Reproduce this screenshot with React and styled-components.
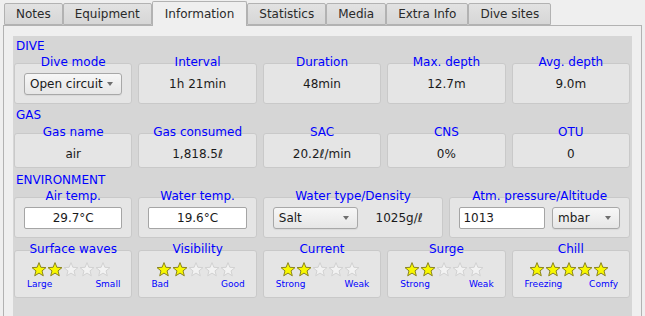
import React from 'react'
import styled, { createGlobalStyle } from 'styled-components'

const GlobalStyle = createGlobalStyle`
  html, body {
    margin: 0;
    padding: 0;
    height: 100%;
    overflow: hidden;
    background: #efefef;
  }
  #root {
    height: 100%;
  }
  * {
    box-sizing: border-box;
  }
`

const Window = styled.div`
  height: 100%;
  display: flex;
  flex-direction: column;
  background: #efefef;
  font-family: 'DejaVu Sans', 'Liberation Sans', sans-serif;
  font-size: 12px;
  color: #1a1a1a;
`

const TabBar = styled.div`
  display: flex;
  align-items: flex-end;
  height: 25px;
  padding-left: 4px;
`

const Tab = styled.div`
  position: relative;
  height: ${p => (p.$active ? '25px' : '22px')};
  margin-bottom: ${p => (p.$active ? '-1px' : '0')};
  padding: 0 ${p => (p.$active ? '12px' : '11px')};
  display: flex;
  align-items: center;
  border: 1px solid #b2b2b2;
  border-bottom: ${p => (p.$active ? 'none' : '1px solid #b2b2b2')};
  border-radius: 2px 2px 0 0;
  background: ${p =>
    p.$active ? '#efefef' : 'linear-gradient(#e2e2e2, #d6d6d6)'};
  color: #2a2a2a;
  z-index: ${p => (p.$active ? 2 : 1)};
  white-space: nowrap;
`

const Pane = styled.div`
  flex: 1;
  margin: 0 3px 0 3px;
  border: 1px solid #b2b2b2;
  border-bottom: none;
  padding: 10px 9px 0 9px;
  display: flex;
  flex-direction: column;
  min-height: 0;
`

const Content = styled.div`
  flex: 1;
  background: #d6d6d6;
  padding: 3px 2px 0 1px;
`

const SectionLabel = styled.div`
  color: #0000ff;
  line-height: 14px;
  padding-left: 2px;
  margin-top: ${p => p.$top || 0}px;
`

const Row = styled.div`
  display: grid;
  grid-template-columns: ${p => p.$cols || 'repeat(5, 1fr)'};
  column-gap: 6px;
  margin-top: ${p => p.$top || 0}px;
`

const Group = styled.div`
  display: flex;
  flex-direction: column;
  min-width: 0;
`

const GroupTitle = styled.div`
  position: relative;
  z-index: 1;
  color: #0000ff;
  line-height: 14px;
  text-align: center;
  white-space: nowrap;
`

const Frame = styled.div`
  margin-top: -6px;
  height: ${p => p.$h}px;
  padding: ${p => p.$pad || '0 9px'};
  background: #e5e5e5;
  border: 1px solid #c9c9c9;
  border-radius: 3px;
  display: flex;
  flex-direction: ${p => (p.$column ? 'column' : 'row')};
  align-items: center;
  justify-content: ${p => (p.$column ? 'flex-start' : 'center')};
  gap: ${p => (p.$column ? 0 : 7)}px;
`

const Value = styled.div`
  flex: ${p => (p.$grow ? 1 : 'none')};
  text-align: center;
  white-space: nowrap;
  color: #1a1a1a;
`

const Combo = styled.div`
  flex: ${p => (p.$w ? 'none' : 1)};
  width: ${p => (p.$w ? `${p.$w}px` : 'auto')};
  height: 22px;
  display: flex;
  align-items: center;
  justify-content: space-between;
  padding: 0 8px 0 5px;
  border: 1px solid #a8a8a8;
  border-radius: 3px;
  background: linear-gradient(#f7f7f7, #e6e6e6);
  box-shadow: 0 1px 1px rgba(0, 0, 0, 0.06);
  color: #1a1a1a;
  white-space: nowrap;
`

const Arrow = styled.span`
  width: 0;
  height: 0;
  border-left: 3.5px solid transparent;
  border-right: 3.5px solid transparent;
  border-top: 4px solid #6e6e6e;
`

const Input = styled.div`
  flex: ${p => (p.$w ? 'none' : 1)};
  width: ${p => (p.$w ? `${p.$w}px` : 'auto')};
  height: 22px;
  display: flex;
  align-items: center;
  justify-content: ${p => (p.$left ? 'flex-start' : 'center')};
  padding: 0 3px;
  background: #ffffff;
  border: 1px solid #a5a5a5;
  border-radius: 2px;
  color: #1a1a1a;
`

const Stars = styled.div`
  display: flex;
  height: 16px;
  margin-right: 4px;
`

const Scale = styled.div`
  align-self: stretch;
  display: flex;
  justify-content: space-between;
  margin-top: 2px;
  padding: 0 2px 0 3px;
  font-size: 9px;
  line-height: 11px;
  color: #0000ff;
`

const STAR = (() => {
  const pts = []
  for (let i = 0; i < 10; i++) {
    const r = i % 2 === 0 ? 7.3 : 3.2
    const a = (-90 + i * 36) * (Math.PI / 180)
    pts.push(`${(8 + r * Math.cos(a)).toFixed(2)},${(8.9 + r * Math.sin(a)).toFixed(2)}`)
  }
  return pts.join(' ')
})()

const Star = ({ on }) => (
  <svg width="16" height="16" viewBox="0 0 16 16">
    <polygon
      points={STAR}
      fill={on ? '#f8f800' : '#f2f2f2'}
      stroke={on ? '#8a8420' : '#d2d2d2'}
      strokeWidth="1"
      strokeLinejoin="round"
    />
  </svg>
)

const GroupBox = ({ title, h, pad, column, children }) => (
  <Group>
    <GroupTitle>{title}</GroupTitle>
    <Frame $h={h} $pad={pad} $column={column}>
      {children}
    </Frame>
  </Group>
)

const Rating = ({ title, value, low, high }) => (
  <GroupBox title={title} h={48} pad="10px 9px 0 9px" column>
    <Stars>
      {[0, 1, 2, 3, 4].map(i => (
        <Star key={i} on={i < value} />
      ))}
    </Stars>
    <Scale>
      <span>{low}</span>
      <span>{high}</span>
    </Scale>
  </GroupBox>
)

const tabs = ['Notes', 'Equipment', 'Information', 'Statistics', 'Media', 'Extra Info', 'Dive sites']

const diveRow = [
  { title: 'Interval', value: '1h 21min' },
  { title: 'Duration', value: '48min' },
  { title: 'Max. depth', value: '12.7m' },
  { title: 'Avg. depth', value: '9.0m' }
]

const gasRow = [
  { title: 'Gas name', value: 'air' },
  { title: 'Gas consumed', value: '1,818.5ℓ' },
  { title: 'SAC', value: '20.2ℓ/min' },
  { title: 'CNS', value: '0%' },
  { title: 'OTU', value: '0' }
]

const ratings = [
  { title: 'Surface waves', value: 2, low: 'Large', high: 'Small' },
  { title: 'Visibility', value: 2, low: 'Bad', high: 'Good' },
  { title: 'Current', value: 2, low: 'Strong', high: 'Weak' },
  { title: 'Surge', value: 2, low: 'Strong', high: 'Weak' },
  { title: 'Chill', value: 5, low: 'Freezing', high: 'Comfy' }
]

const App = () => (
  <Window>
    <GlobalStyle />
    <TabBar>
      {tabs.map(t => (
        <Tab key={t} $active={t === 'Information'}>
          {t}
        </Tab>
      ))}
    </TabBar>
    <Pane>
      <Content>
        <SectionLabel>DIVE</SectionLabel>
        <Row $top={2}>
          <GroupBox title="Dive mode" h={41}>
            <Combo>
              Open circuit
              <Arrow />
            </Combo>
          </GroupBox>
          {diveRow.map(d => (
            <GroupBox key={d.title} title={d.title} h={41}>
              <Value>{d.value}</Value>
            </GroupBox>
          ))}
        </Row>

        <SectionLabel $top={4}>GAS</SectionLabel>
        <Row $top={3}>
          {gasRow.map(g => (
            <GroupBox key={g.title} title={g.title} h={35} pad="6px 9px 0 9px">
              <Value>{g.value}</Value>
            </GroupBox>
          ))}
        </Row>

        <SectionLabel $top={5}>ENVIRONMENT</SectionLabel>
        <Row $top={2} $cols="118.4fr 118.4fr 180.6fr 180.6fr">
          <GroupBox title="Air temp." h={41}>
            <Input>29.7°C</Input>
          </GroupBox>
          <GroupBox title="Water temp." h={41}>
            <Input>19.6°C</Input>
          </GroupBox>
          <GroupBox title="Water type/Density" h={41}>
            <Combo $w={85}>
              Salt
              <Arrow />
            </Combo>
            <Value $grow>1025g/ℓ</Value>
          </GroupBox>
          <GroupBox title="Atm. pressure/Altitude" h={41}>
            <Input $left>1013</Input>
            <Combo $w={68}>
              mbar
              <Arrow />
            </Combo>
          </GroupBox>
        </Row>
        <Row $top={4}>
          {ratings.map(r => (
            <Rating key={r.title} {...r} />
          ))}
        </Row>
      </Content>
    </Pane>
  </Window>
)

export default App
